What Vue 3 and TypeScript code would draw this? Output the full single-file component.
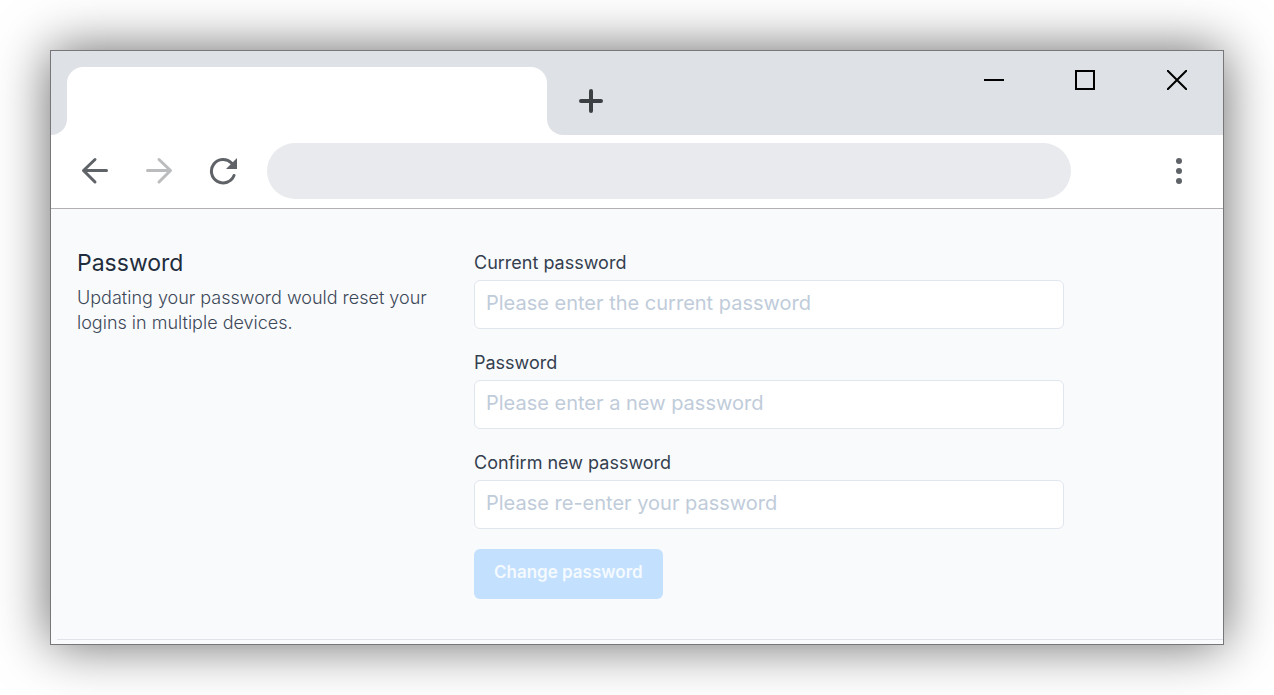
<script setup lang="ts">
import { reactive } from 'vue'

interface Field {
  id: 'current' | 'next' | 'confirm'
  label: string
  placeholder: string
  autocomplete: string
}

const fields: Field[] = [
  { id: 'current', label: 'Current password', placeholder: 'Please enter the current password', autocomplete: 'current-password' },
  { id: 'next', label: 'Password', placeholder: 'Please enter a new password', autocomplete: 'new-password' },
  { id: 'confirm', label: 'Confirm new password', placeholder: 'Please re-enter your password', autocomplete: 'new-password' },
]

const form = reactive<Record<Field['id'], string>>({ current: '', next: '', confirm: '' })
</script>

<template>
  <div class="window">
    <header class="titlebar">
      <div class="edge"></div>
      <div class="tab-slot"><div class="tab"></div></div>
      <div class="strip">
        <button class="new-tab" type="button" aria-label="New tab">
          <svg width="24" height="24" viewBox="0 0 24 24"><path d="M12 2v20M2 12h20" stroke="#3c4043" stroke-width="4" stroke-linecap="round" /></svg>
        </button>
        <div class="controls">
          <button type="button" aria-label="Minimize">
            <svg width="22" height="20" viewBox="0 0 22 20"><path d="M2 10h20" stroke="#000" stroke-width="2" /></svg>
          </button>
          <button type="button" aria-label="Maximize">
            <svg width="20" height="20" viewBox="0 0 20 20"><path d="M1 1h18v18H1z" fill="none" stroke="#000" stroke-width="2" /></svg>
          </button>
          <button type="button" aria-label="Close">
            <svg width="20" height="20" viewBox="0 0 20 20"><path d="M0 0l20 20M20 0L0 20" stroke="#000" stroke-width="2" /></svg>
          </button>
        </div>
      </div>
    </header>

    <nav class="toolbar" aria-label="Browser">
      <button type="button" aria-label="Back">
        <svg width="28" height="28" viewBox="0 0 28 28"><path d="M25.500 13.500H2.500M14 2.500l-11.500 11L14 25" /></svg>
      </button>
      <button class="muted" type="button" aria-label="Forward">
        <svg width="28" height="28" viewBox="0 0 28 28"><path d="M2.500 13.500H25.500M14 2.500l11.500 11L14 25" /></svg>
      </button>
      <button type="button" aria-label="Reload">
        <svg width="28" height="28" viewBox="0 0 28 28">
          <path d="M25 18.500A11.700 11.700 0 1 1 22.500 6" />
          <path class="solid" d="M28 1v11H17z" />
        </svg>
      </button>
      <input class="address" type="text" aria-label="Address" />
      <button class="menu" type="button" aria-label="Menu">
        <svg width="28" height="28" viewBox="0 0 28 28">
          <g class="solid"><circle cx="14" cy="4" r="3" /><circle cx="14" cy="14" r="3" /><circle cx="14" cy="24" r="3" /></g>
        </svg>
      </button>
    </nav>

    <main class="page">
      <section class="settings">
        <div class="intro">
          <h1>Password</h1>
          <p>Updating your password would reset your logins in multiple devices.</p>
        </div>
        <form @submit.prevent>
          <div v-for="field in fields" :key="field.id" class="field">
            <label :for="field.id">{{ field.label }}</label>
            <input
              :id="field.id"
              v-model="form[field.id]"
              type="password"
              :placeholder="field.placeholder"
              :autocomplete="field.autocomplete"
            />
          </div>
          <button class="submit" type="submit" disabled>Change password</button>
        </form>
      </section>
      <div class="page-end"></div>
    </main>
  </div>
</template>

<style>
body {
  background: #fff;
}
</style>

<style scoped>
.window {
  margin: 50px;
  border: 1px solid #77777a;
  background: #fff;
  box-shadow: 0 0 50px rgba(0, 0, 0, 0.6);
  font-family: Inter, 'Liberation Sans', sans-serif;
}

button {
  display: flex;
  align-items: center;
  justify-content: center;
  padding: 0;
  border: 0;
  background: none;
  font: inherit;
}

.titlebar {
  display: flex;
  height: 84px;
}

.edge {
  width: 16px;
  background: #dee1e6;
  border-bottom-right-radius: 16px;
}

.tab-slot {
  display: flex;
  flex: 0 1 480px;
  padding-top: 16px;
  background: linear-gradient(#dee1e6 50%, #fff 50%);
}

.tab {
  flex: 1;
  background: #fff;
  border-radius: 16px 16px 0 0;
}

.strip {
  display: flex;
  flex: 1;
  justify-content: space-between;
  background: #dee1e6;
  border-bottom-left-radius: 16px;
}

.new-tab {
  width: 88px;
  margin-top: 16px;
}

.controls {
  display: flex;
  height: 58px;
}

.controls button {
  width: 92px;
}

.toolbar {
  display: flex;
  padding: 8px 12px 9px;
  border-bottom: 1px solid #b3b0b3;
}

.toolbar button {
  width: 64px;
  height: 56px;
}

.toolbar svg {
  fill: none;
  stroke: #5f6368;
  stroke-width: 3px;
  stroke-linecap: round;
  stroke-linejoin: round;
}

.toolbar .muted svg {
  stroke: #babcbe;
}

.toolbar .solid {
  fill: #5f6368;
  stroke: none;
}

.address {
  flex: 1;
  min-width: 0;
  height: 56px;
  box-sizing: border-box;
  margin: 0 76px 0 12px;
  padding: 0 24px;
  border: 0;
  border-radius: 28px;
  background: #e8eaed;
  font: inherit;
}

.page {
  background: #f9fafc;
}

.settings {
  display: grid;
  grid-template-columns: 371fr 590fr;
  column-gap: 26px;
  padding: 42px 159px 40px 26px;
}

h1 {
  margin: 0;
  color: #1f2d3d;
  font-size: 23px;
  font-weight: 400;
  line-height: 24px;
}

p {
  margin: 10px 0 0;
  color: #3c4858;
  font-size: 18px;
  font-weight: 300;
  line-height: 25px;
}

form {
  display: flex;
  flex-direction: column;
  align-items: flex-start;
}

.field {
  display: flex;
  flex-direction: column;
  align-self: stretch;
  gap: 5px;
  margin-bottom: 22px;
}

.field:nth-last-child(2) {
  margin-bottom: 20px;
}

label {
  color: #343f4f;
  font-size: 18px;
  font-weight: 400;
  line-height: 24px;
}

.field input {
  height: 49px;
  box-sizing: border-box;
  padding: 0 11px 4px;
  border: 1px solid #e0e6ed;
  border-radius: 6px;
  background: #fff;
  font: inherit;
  font-size: 20px;
}

.field input::placeholder {
  color: #c0ccda;
  opacity: 1;
}

.submit {
  height: 50px;
  padding: 0 20px 5px;
  border-radius: 6px;
  background: #c3e0fe;
  color: #f5faff;
  font-size: 17px;
  font-weight: 600;
}

.page-end {
  height: 4px;
  margin-left: 6px;
  border-top: 1px solid #e0e4ea;
  background: #fafbfc;
}
</style>
